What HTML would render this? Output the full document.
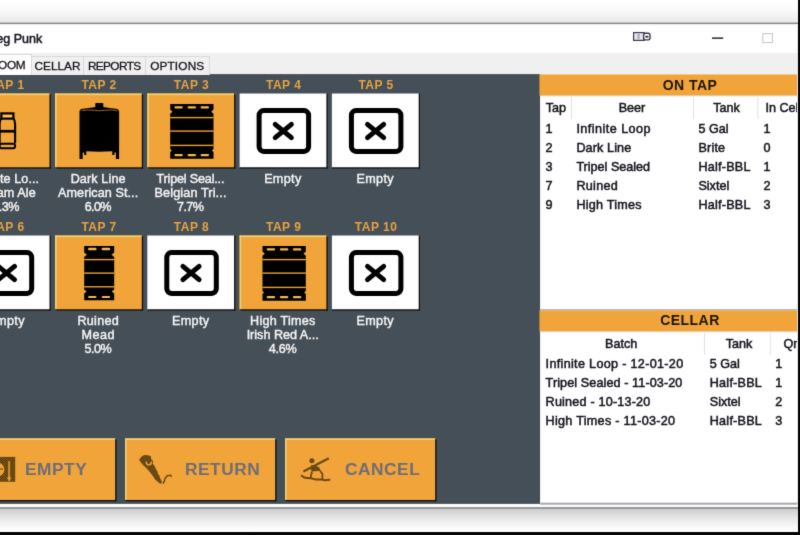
<!DOCTYPE html>
<html lang="en">
<head>
<meta charset="utf-8">
<title>Keg Punk</title>
<style>
html,body{margin:0;padding:0;}
body{width:800px;height:535px;overflow:hidden;background:#fff;position:relative;
  font-family:"Liberation Sans",sans-serif;color:#15151f;}
.abs{position:absolute;}
#app{position:absolute;left:-10px;top:-10px;width:820px;height:555px;filter:url(#soft);overflow:hidden;}
#in{position:absolute;left:10px;top:10px;width:800px;height:535px;}
#title{-webkit-text-stroke:0.5px #15151f;position:absolute;left:-12px;top:30px;font-size:12.5px;line-height:18px;white-space:nowrap;color:#15151f;}
.tab{-webkit-text-stroke:0.3px #15151f;position:absolute;top:55.5px;height:19px;box-sizing:border-box;border:1px solid #d9d9d9;border-bottom:none;
  background:#f0f0f0;font-size:11.8px;line-height:18px;text-align:center;white-space:nowrap;color:#15151f;}
.tab.sel{top:53.5px;height:21px;background:#fff;line-height:21px;}
.taplbl{position:absolute;width:88px;text-align:center;font-weight:bold;font-size:12px;line-height:12px;color:#e5a440;white-space:nowrap;letter-spacing:0.5px;}
.cap{-webkit-text-stroke:0.45px #f4f4f4;position:absolute;width:110px;text-align:center;font-size:12.6px;line-height:14px;color:#f2f2f2;white-space:nowrap;}
.btxt{position:absolute;font-weight:bold;font-size:16px;line-height:22px;letter-spacing:0.5px;color:#6d6d78;white-space:nowrap;transform:scaleX(1.08);transform-origin:0 0;}
#clip{position:absolute;left:0;top:0;width:797.4px;height:535px;overflow:hidden;}
.hdr{position:absolute;width:300px;height:20px;text-align:center;font-weight:bold;font-size:14px;line-height:20px;color:#1a1608;letter-spacing:0.45px;}
.th,.td{-webkit-text-stroke:0.5px #15151f;position:absolute;font-size:12.6px;line-height:16px;white-space:nowrap;color:#15151f;}
</style>
</head>
<body>
<svg width="0" height="0" style="position:absolute"><defs><filter id="soft" x="0" y="0" width="100%" height="100%" color-interpolation-filters="sRGB"><feConvolveMatrix order="3" kernelMatrix="0.0114 0.0841 0.0114 0.0841 0.618 0.0841 0.0114 0.0841 0.0114" divisor="1" edgeMode="duplicate" preserveAlpha="true"/></filter></defs></svg>
<div id="app"><div id="in">
<svg class="abs" style="left:-10px;top:-10px" width="820" height="555" viewBox="-10 -10 820 555">
<defs><pattern id="st" patternUnits="userSpaceOnUse" width="1.66" height="1.66"><rect width="1.66" height="1.66" fill="#9a6a20"/><rect x="0" y="0" width="0.83" height="0.83" fill="#3c2605"/><rect x="0.83" y="0.83" width="0.83" height="0.83" fill="#3c2605"/></pattern></defs>
<defs><linearGradient id="gt" x1="0" y1="0" x2="0" y2="1"><stop offset="0" stop-color="#ffffff"/><stop offset="0.45" stop-color="#fafafa"/><stop offset="1" stop-color="#e8e8e8"/></linearGradient><linearGradient id="gb" x1="0" y1="0" x2="0" y2="1"><stop offset="0" stop-color="#cdcdcd"/><stop offset="0.35" stop-color="#e4e4e4"/><stop offset="0.75" stop-color="#f7f7f7"/><stop offset="1" stop-color="#ffffff"/></linearGradient></defs>
<rect x="-10" y="-10" width="808" height="33" fill="#ffffff"/>
<rect x="-10" y="0" width="808" height="23" fill="url(#gt)"/>
<rect x="-10" y="22.6" width="808" height="1.8" fill="#8a8a8a"/>
<rect x="-10" y="24.4" width="808" height="28.6" fill="#ffffff"/>
<rect x="-10" y="53" width="808" height="21.2" fill="#f0f0f0"/>
<g transform="translate(630 28)"><rect x="3.6" y="4.6" width="10.6" height="7.8" fill="#e9e9ee" stroke="#3a3a4c" stroke-width="1.2"/><rect x="7" y="5.6" width="3" height="5.8" fill="#b9b9c2"/><rect x="13.6" y="5.3" width="6.4" height="6.6" rx="1.8" fill="#fff" stroke="#3a3a4c" stroke-width="1.4"/><rect x="15.4" y="7.8" width="3" height="1.8" fill="#2a2a3a"/><rect x="82" y="9.4" width="11.2" height="1.5" fill="#2b2b2b"/><rect x="132.8" y="5.6" width="9.6" height="9" fill="none" stroke="#c4c4c4" stroke-width="1"/></g>
<rect x="-10" y="74.1" width="550.3" height="429.8" fill="#454f57"/>
<rect x="540.3" y="74.1" width="257.7" height="429.8" fill="#ffffff"/>
<rect x="539.45" y="74.4" width="257.95" height="21.4" fill="#f0a43a"/>
<rect x="540.3" y="95.6" width="257.1" height="0.9" fill="#dde3ee"/>
<rect x="540.3" y="309.2" width="257.1" height="1.3" fill="#a4a7b2"/>
<rect x="539.45" y="310.4" width="257.95" height="21.3" fill="#f0a43a"/>
<rect x="540.3" y="331.5" width="257.1" height="0.9" fill="#dde3ee"/>
<rect x="797.2" y="24.4" width="0.8" height="482" fill="#e4e4e4"/>
<rect x="571.0" y="97" width="1" height="22" fill="#e0e0e0"/>
<rect x="692.9" y="97" width="1" height="22" fill="#e0e0e0"/>
<rect x="757.4" y="97" width="1" height="22" fill="#e0e0e0"/>
<rect x="704.0" y="333" width="1" height="22" fill="#e0e0e0"/>
<rect x="769.7" y="333" width="1" height="22" fill="#e0e0e0"/>
<rect x="-10" y="504" width="808" height="3" fill="#fdfdfd"/>
<rect x="-10" y="507" width="808" height="2" fill="#989898"/>
<rect x="-10" y="509" width="808" height="23" fill="url(#gb)"/>
<rect x="540.3" y="502.7" width="257.1" height="2" fill="#a6a8b0"/>
<rect x="798" y="-10" width="12" height="555" fill="#050505"/>
<rect x="-10" y="532" width="820" height="13" fill="#050505"/>
<g transform="translate(-37.30 93.50)"><rect x="0.00" y="0.00" width="87.40" height="74.40" fill="#f0a43a"/><rect x="0.00" y="0.00" width="88.10" height="1.60" fill="#f1d272"/><rect x="0.00" y="0.00" width="1.60" height="75.10" fill="#f1d272"/><rect x="86.80" y="0.00" width="1.30" height="75.10" fill="#100e0a"/><rect x="0.00" y="73.80" width="88.10" height="1.30" fill="#100e0a"/><rect x="38.6" y="19.9" width="12.1" height="5.2" fill="none" stroke="#000" stroke-width="2.2"/><rect x="40.3" y="21.5" width="8.8" height="2.1" fill="#f8c668"/><path d="M38.6 25.1Q36.9 26.8 36.9 30.8V49.8M50.7 25.1Q52.4 26.8 52.4 30.8V49.8" fill="none" stroke="#000" stroke-width="2.1"/><rect x="36.8" y="36.4" width="15.7" height="2.7" fill="#000"/><rect x="36.9" y="50.2" width="15.5" height="4.6" rx="2" fill="none" stroke="#000" stroke-width="2"/></g>
<g transform="translate(55.00 93.50)"><rect x="0.00" y="0.00" width="87.40" height="74.40" fill="#f0a43a"/><rect x="0.00" y="0.00" width="88.10" height="1.60" fill="#f1d272"/><rect x="0.00" y="0.00" width="1.60" height="75.10" fill="#f1d272"/><rect x="86.80" y="0.00" width="1.30" height="75.10" fill="#100e0a"/><rect x="0.00" y="73.80" width="88.10" height="1.30" fill="#100e0a"/><rect x="40.3" y="9.4" width="8" height="5.5" rx="0.8" fill="#000"/><path d="M26.0 15.6Q34.3 14.6 40.3 13.6H48.3Q54.3 14.6 62.6 15.6L64.1 17.4V65.4H60.9V58.9H59.5V61.4H57.3V57.7Q44.3 58.6 31.3 57.7V61.4H29.1V58.9H27.7V65.4H24.5V17.4Z" fill="#000"/><path d="M26.5 17.0Q32.3 16.0 39.3 16.8Q44.3 17.8 49.3 16.8Q56.3 16.0 62.1 17.0" fill="none" stroke="#d8922f" stroke-width="0.7"/></g>
<g transform="translate(147.30 93.50)"><rect x="0.00" y="0.00" width="87.40" height="74.40" fill="#f0a43a"/><rect x="0.00" y="0.00" width="88.10" height="1.60" fill="#f1d272"/><rect x="0.00" y="0.00" width="1.60" height="75.10" fill="#f1d272"/><rect x="86.80" y="0.00" width="1.30" height="75.10" fill="#100e0a"/><rect x="0.00" y="73.80" width="88.10" height="1.30" fill="#100e0a"/><path d="M22.9 10.5H66.2V16.1L63.9 18.2L66.2 20.3V55.5L64.6 57.0L66.2 58.5V65.3H22.9V58.5L24.5 57.0L22.9 55.5V20.3L25.2 18.2L22.9 16.1Z" fill="#000"/><rect x="22.9" y="23.4" width="43.3" height="1.4" fill="#e9a038"/><rect x="22.9" y="36.9" width="43.3" height="1.4" fill="#e9a038"/><rect x="22.9" y="51.2" width="43.3" height="1.4" fill="#e9a038"/><rect x="27.1" y="12.7" width="8.4" height="2.4" rx="1" fill="#f6b74d"/><rect x="27.1" y="60.5" width="8.4" height="2.2" rx="1" fill="#f6b74d"/><rect x="40.3" y="12.7" width="8.4" height="2.4" rx="1" fill="#f6b74d"/><rect x="40.3" y="60.5" width="8.4" height="2.2" rx="1" fill="#f6b74d"/><rect x="53.3" y="12.7" width="8.4" height="2.4" rx="1" fill="#f6b74d"/><rect x="53.3" y="60.5" width="8.4" height="2.2" rx="1" fill="#f6b74d"/></g>
<g transform="translate(239.60 93.50)"><rect x="0.00" y="0.00" width="87.40" height="74.40" fill="#ffffff"/><rect x="86.80" y="0.00" width="1.30" height="75.10" fill="#100e0a"/><rect x="0.00" y="73.80" width="88.10" height="1.30" fill="#100e0a"/><rect x="19.50" y="17.10" width="49.5" height="40.8" rx="4.6" fill="none" stroke="#000" stroke-width="5"/><path d="M35.60 30.80L51.80 44.20M51.80 30.80L35.60 44.20" stroke="#000" stroke-width="4.9" stroke-linecap="round"/></g>
<g transform="translate(331.90 93.50)"><rect x="0.00" y="0.00" width="87.40" height="74.40" fill="#ffffff"/><rect x="86.80" y="0.00" width="1.30" height="75.10" fill="#100e0a"/><rect x="0.00" y="73.80" width="88.10" height="1.30" fill="#100e0a"/><rect x="19.50" y="17.10" width="49.5" height="40.8" rx="4.6" fill="none" stroke="#000" stroke-width="5"/><path d="M35.60 30.80L51.80 44.20M51.80 30.80L35.60 44.20" stroke="#000" stroke-width="4.9" stroke-linecap="round"/></g>
<g transform="translate(-37.30 235.50)"><rect x="0.00" y="0.00" width="87.40" height="74.40" fill="#ffffff"/><rect x="86.80" y="0.00" width="1.30" height="75.10" fill="#100e0a"/><rect x="0.00" y="73.80" width="88.10" height="1.30" fill="#100e0a"/><rect x="19.50" y="17.10" width="49.5" height="40.8" rx="4.6" fill="none" stroke="#000" stroke-width="5"/><path d="M35.60 30.80L51.80 44.20M51.80 30.80L35.60 44.20" stroke="#000" stroke-width="4.9" stroke-linecap="round"/></g>
<g transform="translate(55.00 235.50)"><rect x="0.00" y="0.00" width="87.40" height="74.40" fill="#f0a43a"/><rect x="0.00" y="0.00" width="88.10" height="1.60" fill="#f1d272"/><rect x="0.00" y="0.00" width="1.60" height="75.10" fill="#f1d272"/><rect x="86.80" y="0.00" width="1.30" height="75.10" fill="#100e0a"/><rect x="0.00" y="73.80" width="88.10" height="1.30" fill="#100e0a"/><path d="M29.2 10.5H59.2V16.9L56.5 19.2L59.2 21.5V53.9L56.8 55.9L59.2 57.9V64.7H29.2V57.9L31.6 55.9L29.2 53.9V21.5L31.9 19.2L29.2 16.9Z" fill="#000"/><rect x="29.2" y="23.4" width="30.0" height="1.4" fill="#e9a038"/><rect x="29.2" y="36.9" width="30.0" height="1.4" fill="#e9a038"/><rect x="29.2" y="50.6" width="30.0" height="1.4" fill="#e9a038"/><rect x="33.1" y="12.3" width="8.4" height="2.4" rx="1" fill="#f6b74d"/><rect x="33.1" y="60.4" width="8.4" height="2.2" rx="1" fill="#f6b74d"/><rect x="46.7" y="12.3" width="8.4" height="2.4" rx="1" fill="#f6b74d"/><rect x="46.7" y="60.4" width="8.4" height="2.2" rx="1" fill="#f6b74d"/></g>
<g transform="translate(147.30 235.50)"><rect x="0.00" y="0.00" width="87.40" height="74.40" fill="#ffffff"/><rect x="86.80" y="0.00" width="1.30" height="75.10" fill="#100e0a"/><rect x="0.00" y="73.80" width="88.10" height="1.30" fill="#100e0a"/><rect x="19.50" y="17.10" width="49.5" height="40.8" rx="4.6" fill="none" stroke="#000" stroke-width="5"/><path d="M35.60 30.80L51.80 44.20M51.80 30.80L35.60 44.20" stroke="#000" stroke-width="4.9" stroke-linecap="round"/></g>
<g transform="translate(239.60 235.50)"><rect x="0.00" y="0.00" width="87.40" height="74.40" fill="#f0a43a"/><rect x="0.00" y="0.00" width="88.10" height="1.60" fill="#f1d272"/><rect x="0.00" y="0.00" width="1.60" height="75.10" fill="#f1d272"/><rect x="86.80" y="0.00" width="1.30" height="75.10" fill="#100e0a"/><rect x="0.00" y="73.80" width="88.10" height="1.30" fill="#100e0a"/><path d="M22.9 10.5H66.2V16.1L63.9 18.2L66.2 20.3V55.5L64.6 57.0L66.2 58.5V65.3H22.9V58.5L24.5 57.0L22.9 55.5V20.3L25.2 18.2L22.9 16.1Z" fill="#000"/><rect x="22.9" y="23.4" width="43.3" height="1.4" fill="#e9a038"/><rect x="22.9" y="36.9" width="43.3" height="1.4" fill="#e9a038"/><rect x="22.9" y="51.2" width="43.3" height="1.4" fill="#e9a038"/><rect x="27.1" y="12.7" width="8.4" height="2.4" rx="1" fill="#f6b74d"/><rect x="27.1" y="60.5" width="8.4" height="2.2" rx="1" fill="#f6b74d"/><rect x="40.3" y="12.7" width="8.4" height="2.4" rx="1" fill="#f6b74d"/><rect x="40.3" y="60.5" width="8.4" height="2.2" rx="1" fill="#f6b74d"/><rect x="53.3" y="12.7" width="8.4" height="2.4" rx="1" fill="#f6b74d"/><rect x="53.3" y="60.5" width="8.4" height="2.2" rx="1" fill="#f6b74d"/></g>
<g transform="translate(331.90 235.50)"><rect x="0.00" y="0.00" width="87.40" height="74.40" fill="#ffffff"/><rect x="86.80" y="0.00" width="1.30" height="75.10" fill="#100e0a"/><rect x="0.00" y="73.80" width="88.10" height="1.30" fill="#100e0a"/><rect x="19.50" y="17.10" width="49.5" height="40.8" rx="4.6" fill="none" stroke="#000" stroke-width="5"/><path d="M35.60 30.80L51.80 44.20M51.80 30.80L35.60 44.20" stroke="#000" stroke-width="4.9" stroke-linecap="round"/></g>
<g transform="translate(-35 438.4)"><rect x="0.00" y="0.00" width="150.80" height="62.20" fill="#f0a43a"/><rect x="0.00" y="0.00" width="151.50" height="1.60" fill="#f1d272"/><rect x="0.00" y="0.00" width="1.60" height="62.90" fill="#f1d272"/><rect x="150.20" y="0.00" width="1.30" height="62.90" fill="#100e0a"/><rect x="0.00" y="61.60" width="151.50" height="1.30" fill="#100e0a"/></g>
<g transform="translate(-10.5 456.7)"><rect x="0" y="0.2" width="25.7" height="24.9" fill="url(#st)"/><rect x="18.6" y="4.4" width="2" height="20" fill="#cf8c2e"/><path d="M17.4 21.6L19.6 19.4L21.8 21.6L19.6 23.8Z" fill="#e0a038"/><ellipse cx="9.6" cy="12.8" rx="5.2" ry="6.4" fill="#eea23a"/><rect x="9" y="11.6" width="4.5" height="1.4" fill="#8a5f1e"/></g>
<g transform="translate(125 438.4)"><rect x="0.00" y="0.00" width="150.80" height="62.20" fill="#f0a43a"/><rect x="0.00" y="0.00" width="151.50" height="1.60" fill="#f1d272"/><rect x="0.00" y="0.00" width="1.60" height="62.90" fill="#f1d272"/><rect x="150.20" y="0.00" width="1.30" height="62.90" fill="#100e0a"/><rect x="0.00" y="61.60" width="151.50" height="1.30" fill="#100e0a"/></g>
<g><path d="M139 459.8L141.8 456.2L144.5 455.1L148 455.3L150.8 456.2L151.4 459.6L153.2 461L152.8 463.7L155.1 466.8L156 469.6L157.5 471.5L158 474L159.4 475.5L160 478.2L161.4 480.2L161.9 483.2L160.2 483.8L157.4 481.6L155.1 479.4L152 474.7L148.8 470.8L145.7 467.6L141.8 463.7Z" fill="url(#st)"/><path d="M146.2 461.6Q146.4 465 149 464.9Q151.4 464.6 151.6 461.4" fill="none" stroke="#eea23a" stroke-width="1.3"/><path d="M162.9 483.5L164.5 481L164.8 478.8L167.3 475.7L170.4 475.3L171.7 476.7" fill="none" stroke="url(#st)" stroke-width="1.5"/></g>
<g transform="translate(285 438.4)"><rect x="0.00" y="0.00" width="150.80" height="62.20" fill="#f0a43a"/><rect x="0.00" y="0.00" width="151.50" height="1.60" fill="#f1d272"/><rect x="0.00" y="0.00" width="1.60" height="62.90" fill="#f1d272"/><rect x="150.20" y="0.00" width="1.30" height="62.90" fill="#100e0a"/><rect x="0.00" y="61.60" width="151.50" height="1.30" fill="#100e0a"/></g>
<g><circle cx="311.9" cy="460.7" r="2.5" fill="url(#st)"/><path d="M302.9 470.4L328.3 457.3L329.3 459.2L303.9 472.5Z" fill="url(#st)"/><path d="M310.3 468.4L311.1 465.3L314.6 464.9L319.3 467.6L320.5 470.8L311.9 471.5Z" fill="url(#st)"/><path d="M311.9 471.5L310.7 477.6M320.1 470.8L322.5 474.3L322.3 479" fill="none" stroke="url(#st)" stroke-width="1.8"/><path d="M301.7 475.9L305.2 477.8L310.7 478.2L315.4 479.4L320.9 479.4L324.8 480.3L329.5 479.8" fill="none" stroke="url(#st)" stroke-width="2" stroke-linecap="round" stroke-linejoin="round"/></g>
</svg>
<div id="title">Keg Punk</div>
<div class="tab sel" style="left:-30px;width:62px;"><span style="position:absolute;right:5.6px;top:0;letter-spacing:-0.3px">TAPROOM</span></div>
<div class="tab" style="left:31px;width:53px;"><span style="letter-spacing:0px">CELLAR</span></div>
<div class="tab" style="left:83px;width:63px;"><span style="letter-spacing:-0.6px;margin-right:0.6px">REPORTS</span></div>
<div class="tab" style="left:145px;width:64.5px;"><span style="letter-spacing:0.15px">OPTIONS</span></div>
<div class="taplbl" style="left:-37.1px;top:78.6px">TAP 1</div>
<div class="cap" style="left:-49.1px;top:172.3px"><span style="letter-spacing:0.1px;margin-right:-0.1px">Infinite Lo...</span><br><span style="letter-spacing:0.1px;margin-right:-0.1px">Cream Ale</span><br><span style="letter-spacing:-0.5px;margin-right:0.5px">5.3%</span></div>
<div class="taplbl" style="left:55.1px;top:78.6px">TAP 2</div>
<div class="cap" style="left:43.1px;top:172.3px"><span style="letter-spacing:0.12px;margin-right:-0.12px">Dark Line</span><br><span style="letter-spacing:0.08px;margin-right:-0.08px">American St...</span><br><span style="letter-spacing:-0.6px;margin-right:0.6px">6.0%</span></div>
<div class="taplbl" style="left:147.5px;top:78.6px">TAP 3</div>
<div class="cap" style="left:135.5px;top:172.3px"><span style="letter-spacing:-0.18px;margin-right:0.18px">Tripel Seal...</span><br><span style="letter-spacing:0.14px;margin-right:-0.14px">Belgian Tri...</span><br><span style="letter-spacing:-0.6px;margin-right:0.6px">7.7%</span></div>
<div class="taplbl" style="left:239.7px;top:78.6px">TAP 4</div>
<div class="cap" style="left:227.7px;top:172.3px"><span style="letter-spacing:0.35px;margin-right:-0.35px">Empty</span></div>
<div class="taplbl" style="left:332.1px;top:78.6px">TAP 5</div>
<div class="cap" style="left:320.1px;top:172.3px"><span style="letter-spacing:0.35px;margin-right:-0.35px">Empty</span></div>
<div class="taplbl" style="left:-37.1px;top:220.6px">TAP 6</div>
<div class="cap" style="left:-49.1px;top:314.3px"><span style="letter-spacing:0.35px;margin-right:-0.35px">Empty</span></div>
<div class="taplbl" style="left:55.1px;top:220.6px">TAP 7</div>
<div class="cap" style="left:43.1px;top:314.3px"><span style="letter-spacing:0.3px;margin-right:-0.3px">Ruined</span><br><span style="letter-spacing:0.5px;margin-right:-0.5px">Mead</span><br><span style="letter-spacing:-0.5px;margin-right:0.5px">5.0%</span></div>
<div class="taplbl" style="left:147.5px;top:220.6px">TAP 8</div>
<div class="cap" style="left:135.5px;top:314.3px"><span style="letter-spacing:0.35px;margin-right:-0.35px">Empty</span></div>
<div class="taplbl" style="left:239.7px;top:220.6px">TAP 9</div>
<div class="cap" style="left:227.7px;top:314.3px"><span style="letter-spacing:0.25px;margin-right:-0.25px">High Times</span><br>Irish Red A...<br><span style="letter-spacing:-0.3px;margin-right:0.3px">4.6%</span></div>
<div class="taplbl" style="left:332.1px;top:220.6px">TAP 10</div>
<div class="cap" style="left:320.1px;top:314.3px"><span style="letter-spacing:0.35px;margin-right:-0.35px">Empty</span></div>
<div class="btxt" style="left:24.7px;top:458.6px">EMPTY</div>
<div class="btxt" style="left:184.7px;top:458.6px">RETURN</div>
<div class="btxt" style="left:344.7px;top:458.6px">CANCEL</div>
<div id="clip">
<div class="hdr" style="left:540px;top:75px">ON TAP</div>
<div class="th" style="left:495.8px;width:120px;text-align:center;top:100.0px">Tap</div>
<div class="th" style="left:572.0px;width:120px;text-align:center;top:100.0px">Beer</div>
<div class="th" style="left:666.5px;width:120px;text-align:center;top:100.0px">Tank</div>
<div class="th" style="left:765.4px;top:100.0px">In Cellar</div>
<div class="td" style="left:545.6px;top:121.0px">1</div>
<div class="td" style="left:576.4px;top:121.0px"><span style="letter-spacing:0.46px;margin-right:-0.46px">Infinite Loop</span></div>
<div class="td" style="left:698.4px;top:121.0px">5 Gal</div>
<div class="td" style="left:763.4px;top:121.0px">1</div>
<div class="td" style="left:545.6px;top:140.0px">2</div>
<div class="td" style="left:576.4px;top:140.0px"><span style="letter-spacing:0.12px;margin-right:-0.12px">Dark Line</span></div>
<div class="td" style="left:698.4px;top:140.0px"><span style="letter-spacing:0.2px;margin-right:-0.2px">Brite</span></div>
<div class="td" style="left:763.4px;top:140.0px">0</div>
<div class="td" style="left:545.6px;top:159.0px">3</div>
<div class="td" style="left:576.4px;top:159.0px">Tripel Sealed</div>
<div class="td" style="left:698.4px;top:159.0px"><span style="letter-spacing:0.23px;margin-right:-0.23px">Half-BBL</span></div>
<div class="td" style="left:763.4px;top:159.0px">1</div>
<div class="td" style="left:545.6px;top:178.0px">7</div>
<div class="td" style="left:576.4px;top:178.0px"><span style="letter-spacing:0.3px;margin-right:-0.3px">Ruined</span></div>
<div class="td" style="left:698.4px;top:178.0px">Sixtel</div>
<div class="td" style="left:763.4px;top:178.0px">2</div>
<div class="td" style="left:545.6px;top:197.0px">9</div>
<div class="td" style="left:576.4px;top:197.0px"><span style="letter-spacing:0.25px;margin-right:-0.25px">High Times</span></div>
<div class="td" style="left:698.4px;top:197.0px"><span style="letter-spacing:0.23px;margin-right:-0.23px">Half-BBL</span></div>
<div class="td" style="left:763.4px;top:197.0px">3</div>
<div class="hdr" style="left:540px;top:310px">CELLAR</div>
<div class="th" style="left:561.2px;width:120px;text-align:center;top:336.0px">Batch</div>
<div class="th" style="left:679.0px;width:120px;text-align:center;top:336.0px">Tank</div>
<div class="th" style="left:783.4px;top:336.0px">Qnty</div>
<div class="td" style="left:545.6px;top:356.0px"><span style="letter-spacing:0.32px;margin-right:-0.32px">Infinite Loop - 12-01-20</span></div>
<div class="td" style="left:709.8px;top:356.0px">5 Gal</div>
<div class="td" style="left:775.2px;top:356.0px">1</div>
<div class="td" style="left:545.6px;top:375.0px"><span style="letter-spacing:0.1px;margin-right:-0.1px">Tripel Sealed - 11-03-20</span></div>
<div class="td" style="left:709.8px;top:375.0px"><span style="letter-spacing:0.23px;margin-right:-0.23px">Half-BBL</span></div>
<div class="td" style="left:775.2px;top:375.0px">1</div>
<div class="td" style="left:545.6px;top:394.0px"><span style="letter-spacing:0.2px;margin-right:-0.2px">Ruined - 10-13-20</span></div>
<div class="td" style="left:709.8px;top:394.0px">Sixtel</div>
<div class="td" style="left:775.2px;top:394.0px">2</div>
<div class="td" style="left:545.6px;top:413.0px"><span style="letter-spacing:0.29px;margin-right:-0.29px">High Times - 11-03-20</span></div>
<div class="td" style="left:709.8px;top:413.0px"><span style="letter-spacing:0.23px;margin-right:-0.23px">Half-BBL</span></div>
<div class="td" style="left:775.2px;top:413.0px">3</div>
</div>
</div></div>
</body>
</html>
